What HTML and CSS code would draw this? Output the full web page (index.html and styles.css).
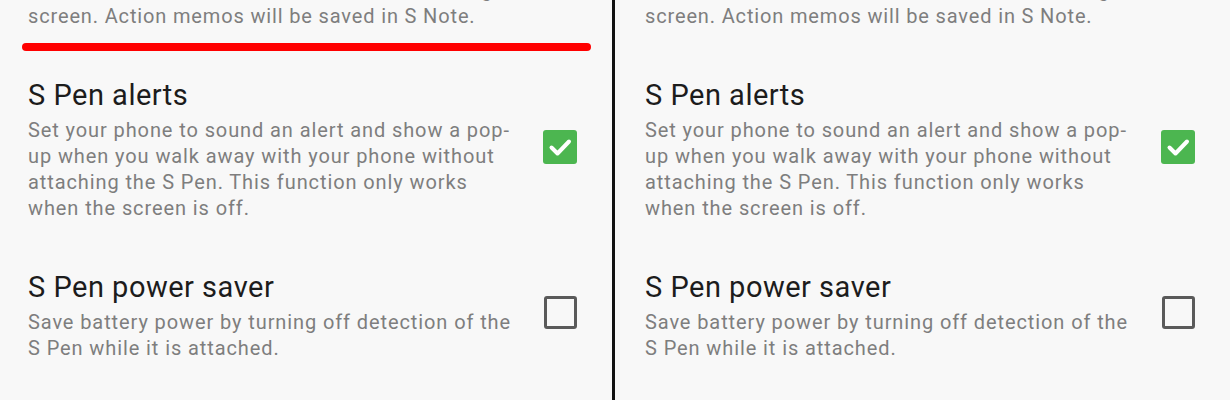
FILE: index.html
```html
<!doctype html>
<html lang="en">
<head>
    <meta charset="UTF-8" />
    <meta name="viewport" content="width=device-width, initial-scale=1.0" />
    <title>S Pen settings</title>
    <link rel="stylesheet" href="styles.css">
</head>
<body>
    <div class="screens">
        <div class="panel">
            <p class="intro">Write action memos on the screen while holding<br>screen. Action memos will be saved in S Note.</p>
            <div class="marker"></div>
            <div class="list">
                <div class="row">
                    <div class="row-text">
                        <h2>S Pen alerts</h2>
                        <p>Set your phone to sound an alert and show a pop-<br>up when you walk away with your phone without<br>attaching the S Pen. This function only works<br>when the screen is off.</p>
                    </div>
                    <span class="check checked">
                        <svg viewBox="0 0 34 34" width="34" height="34"><polyline points="8.5,17.5 14.5,23.5 26,11.5" /></svg>
                    </span>
                </div>
                <div class="row">
                    <div class="row-text">
                        <h2>S Pen power saver</h2>
                        <p>Save battery power by turning off detection of the<br>S Pen while it is attached.</p>
                    </div>
                    <span class="check"></span>
                </div>
            </div>
        </div>

        <div class="divider"></div>

        <div class="panel panel-right">
            <p class="intro">Write action memos on the screen while holding<br>screen. Action memos will be saved in S Note.</p>
            <div class="marker hidden"></div>
            <div class="list">
                <div class="row">
                    <div class="row-text">
                        <h2>S Pen alerts</h2>
                        <p>Set your phone to sound an alert and show a pop-<br>up when you walk away with your phone without<br>attaching the S Pen. This function only works<br>when the screen is off.</p>
                    </div>
                    <span class="check checked">
                        <svg viewBox="0 0 34 34" width="34" height="34"><polyline points="8.5,17.5 14.5,23.5 26,11.5" /></svg>
                    </span>
                </div>
                <div class="row">
                    <div class="row-text">
                        <h2>S Pen power saver</h2>
                        <p>Save battery power by turning off detection of the<br>S Pen while it is attached.</p>
                    </div>
                    <span class="check"></span>
                </div>
            </div>
        </div>
    </div>
</body>
</html>
```

FILE: styles.css
```css
body {
    font-family: 'Roboto', 'Liberation Sans', sans-serif;
    background-color: #f8f8f8;
    margin: 0;
    padding: 0;
    height: 400px;
    overflow: hidden;
}

.screens {
    display: grid;
    grid-template-columns: 612px 3px 1fr;
    height: 400px;
}

.panel {
    padding: 0 35px 0 28px;
    overflow: hidden;
    background-color: #f8f8f8;
}

.panel-right {
    padding-left: 30px;
}

.divider {
    background-color: #111;
}

.intro {
    margin: -23px 0 0;
    font-size: 20px;
    line-height: 26px;
    letter-spacing: 0.85px;
    color: #7e7e7e;
}

.marker {
    height: 8px;
    margin: 14px 0 0 -6px;
    width: 569px;
    border-radius: 4px;
    background-color: #ff0000;
}

.marker.hidden {
    visibility: hidden;
}

.list {
    display: flex;
    flex-direction: column;
    gap: 49px;
    margin-top: 27px;
}

.row {
    display: flex;
    align-items: center;
    justify-content: space-between;
}

.row-text h2 {
    margin: 0;
    font-size: 29px;
    font-weight: normal;
    line-height: 34px;
    letter-spacing: 0.5px;
    color: #1c1c1c;
}

.row-text p {
    margin: 5px 0 0;
    font-size: 20px;
    line-height: 26px;
    letter-spacing: 0.9px;
    color: #7e7e7e;
}

.check {
    width: 33px;
    height: 33px;
    margin-bottom: 6px;
    box-sizing: border-box;
    border: 3px solid #5a5a5a;
    border-radius: 3px;
    flex-shrink: 0;
}

.check.checked {
    width: 34px;
    height: 34px;
    border: none;
    background-color: #4cb650;
}

.check svg {
    display: block;
    fill: none;
    stroke: #fff;
    stroke-width: 4;
    stroke-linecap: round;
    stroke-linejoin: round;
}
```
